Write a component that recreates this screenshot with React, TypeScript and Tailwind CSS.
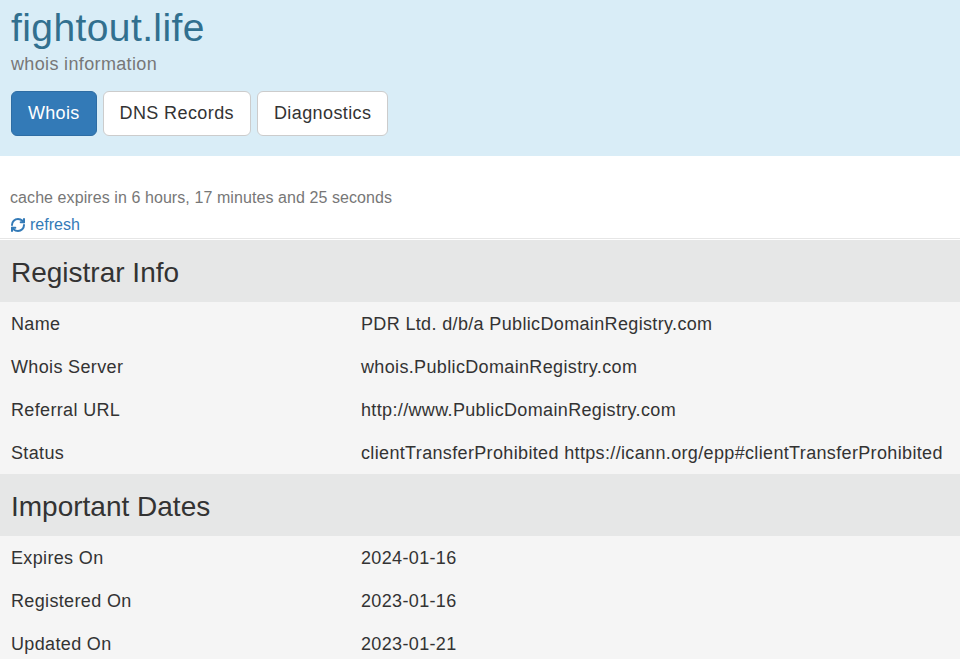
import { RefreshCw } from 'lucide-react';

const registrar = [
    ['Name', 'PDR Ltd. d/b/a PublicDomainRegistry.com'],
    ['Whois Server', 'whois.PublicDomainRegistry.com'],
    ['Referral URL', 'http://www.PublicDomainRegistry.com'],
    ['Status', 'clientTransferProhibited https://icann.org/epp#clientTransferProhibited'],
];

const dates = [
    ['Expires On', '2024-01-16'],
    ['Registered On', '2023-01-16'],
    ['Updated On', '2023-01-21'],
];

function Section({ title, rows }: { title: string; rows: string[][] }) {
    return (
        <div>
            <div className="h-[62px] bg-[#e6e7e7] px-[11px] pt-[3px] flex items-center text-[28px] text-[#333]">
                {title}
            </div>
            {rows.map(([label, value]) => (
                <div key={label} className="h-[43px] pt-[2px] bg-[#f5f5f5] grid grid-cols-[350px_1fr] items-center text-[18px] tracking-[0.35px] text-[#333]">
                    <div className="pl-[11px]">{label}</div>
                    <div className="pl-[11px] whitespace-nowrap">{value}</div>
                </div>
            ))}
        </div>
    );
}

export default function App() {
    return (
        <div className="min-h-screen bg-white font-['Liberation_Sans',Arial,sans-serif] overflow-hidden">
            {/* Header */}
            <div className="bg-[#d9edf7] h-[156px] px-[11px] pt-[7px]">
                <h1 className="text-[39px] leading-[1.1] tracking-[0.4px] text-[#31708f]">fightout.life</h1>
                <div className="mt-[5px] text-[18px] leading-[1.1] tracking-[0.35px] text-[#777]">whois information</div>
                <div className="mt-[16px] flex gap-[6px]">
                    <button className="h-[45px] px-[16px] rounded-[6px] border border-[#2e6da4] bg-[#337ab7] text-white text-[18px] tracking-[0.3px]">
                        Whois
                    </button>
                    <button className="h-[45px] px-[16px] rounded-[6px] border border-[#ccc] bg-white text-[#333] text-[18px] tracking-[0.4px]">
                        DNS Records
                    </button>
                    <button className="h-[45px] px-[16px] rounded-[6px] border border-[#ccc] bg-white text-[#333] text-[18px] tracking-[0.4px]">
                        Diagnostics
                    </button>
                </div>
            </div>

            {/* Cache info */}
            <div className="px-[10px] pt-[32px]">
                <div className="text-[16px] leading-[20px] tracking-[0.08px] text-[#777]">
                    cache expires in 6 hours, 17 minutes and 25 seconds
                </div>
                <a href="#" className="mt-[7px] flex items-center gap-[4px] text-[16px] leading-[20px] text-[#337ab7]">
                    <RefreshCw className="w-[16px] h-[16px]" strokeWidth={3} />
                    refresh
                </a>
            </div>
            <div className="border-t border-[#e6e6e6] mt-[3px] pt-[1px]">
                <Section title="Registrar Info" rows={registrar} />
                <Section title="Important Dates" rows={dates} />
            </div>
        </div>
    );
}
